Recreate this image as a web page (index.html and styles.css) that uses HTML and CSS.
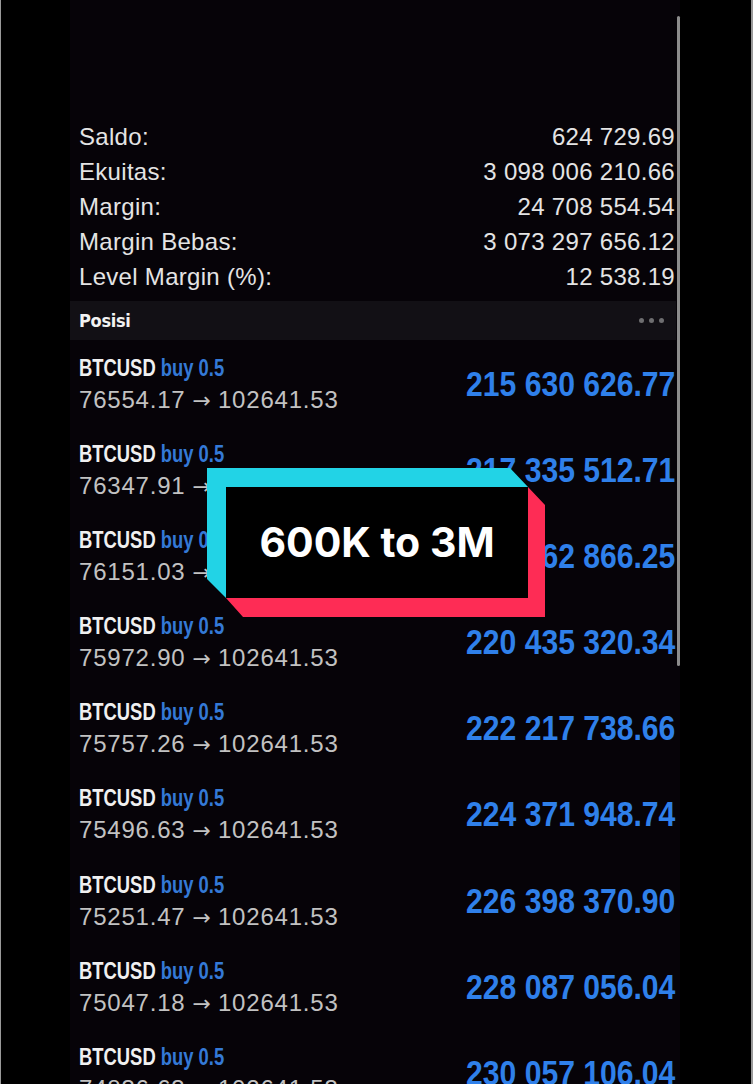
FILE: index.html
```html
<!DOCTYPE html>
<html lang="id">
<head>
	<meta charset="UTF-8">
	<title>Posisi</title>
	<link rel="stylesheet" href="styles.css">
</head>
<body>
	<div class="screen">
		<div class="panel">
			<div class="scrollbar"></div>

			<!-- ringkasan akun -->
			<div class="summary">
				<div class="sum-row"><span>Saldo:</span><span>624 729.69</span></div>
				<div class="sum-row"><span>Ekuitas:</span><span>3 098 006 210.66</span></div>
				<div class="sum-row"><span>Margin:</span><span>24 708 554.54</span></div>
				<div class="sum-row"><span>Margin Bebas:</span><span>3 073 297 656.12</span></div>
				<div class="sum-row"><span>Level Margin (%):</span><span>12 538.19</span></div>
			</div>

			<div class="section-head">
				<span class="section-title">Posisi</span>
				<span class="dots"><i></i><i></i><i></i></span>
			</div>

			<!-- daftar posisi -->
			<ul class="positions">
				<li class="pos">
					<div class="pos-info">
						<p class="pos-name">BTCUSD <span class="pos-type">buy 0.5</span></p>
						<p class="pos-price">76554.17<span class="arrow">→</span>102641.53</p>
					</div>
					<div class="pos-profit">215 630 626.77</div>
				</li>
				<li class="pos">
					<div class="pos-info">
						<p class="pos-name">BTCUSD <span class="pos-type">buy 0.5</span></p>
						<p class="pos-price">76347.91<span class="arrow">→</span>102641.53</p>
					</div>
					<div class="pos-profit">217 335 512.71</div>
				</li>
				<li class="pos">
					<div class="pos-info">
						<p class="pos-name">BTCUSD <span class="pos-type">buy 0.5</span></p>
						<p class="pos-price">76151.03<span class="arrow">→</span>102641.53</p>
					</div>
					<div class="pos-profit">218 962 866.25</div>
				</li>
				<li class="pos">
					<div class="pos-info">
						<p class="pos-name">BTCUSD <span class="pos-type">buy 0.5</span></p>
						<p class="pos-price">75972.90<span class="arrow">→</span>102641.53</p>
					</div>
					<div class="pos-profit">220 435 320.34</div>
				</li>
				<li class="pos">
					<div class="pos-info">
						<p class="pos-name">BTCUSD <span class="pos-type">buy 0.5</span></p>
						<p class="pos-price">75757.26<span class="arrow">→</span>102641.53</p>
					</div>
					<div class="pos-profit">222 217 738.66</div>
				</li>
				<li class="pos">
					<div class="pos-info">
						<p class="pos-name">BTCUSD <span class="pos-type">buy 0.5</span></p>
						<p class="pos-price">75496.63<span class="arrow">→</span>102641.53</p>
					</div>
					<div class="pos-profit">224 371 948.74</div>
				</li>
				<li class="pos">
					<div class="pos-info">
						<p class="pos-name">BTCUSD <span class="pos-type">buy 0.5</span></p>
						<p class="pos-price">75251.47<span class="arrow">→</span>102641.53</p>
					</div>
					<div class="pos-profit">226 398 370.90</div>
				</li>
				<li class="pos">
					<div class="pos-info">
						<p class="pos-name">BTCUSD <span class="pos-type">buy 0.5</span></p>
						<p class="pos-price">75047.18<span class="arrow">→</span>102641.53</p>
					</div>
					<div class="pos-profit">228 087 056.04</div>
				</li>
				<li class="pos">
					<div class="pos-info">
						<p class="pos-name">BTCUSD <span class="pos-type">buy 0.5</span></p>
						<p class="pos-price">74836.63<span class="arrow">→</span>102641.53</p>
					</div>
					<div class="pos-profit">230 057 106.04</div>
				</li>
			</ul>
		</div>

		<!-- label di atas video -->
		<div class="badge">
			<svg class="badge-frame" width="339" height="150" viewBox="0 0 339 150">
				<polygon points="0,0 303,0 321,19 19,19 19,130 0,111" fill="#22d3e6"/>
				<polygon points="321,19 338,37 338,149 36,149 19,130 321,130" fill="#fe2c55"/>
				<rect x="19" y="19" width="302" height="111" fill="#000"/>
			</svg>
			<span class="badge-text">600K to 3M</span>
		</div>
	</div>
</body>
</html>
```

FILE: styles.css
```css
html,
body,
ul,
li,
p {
	margin: 0;
	padding: 0;
}
li {
	list-style: none;
}
body {
	background: #000;
	font-family: "Liberation Sans", Arial, sans-serif;
}
.screen {
	position: relative;
	width: 753px;
	height: 1084px;
	overflow: hidden;
	box-sizing: border-box;
	border-left: 1px solid #9a9a9a;
	border-right: 2px solid #9a9a9a;
	background: #000;
}
.panel {
	position: relative;
	width: 610px;
	height: 1084px;
	margin-left: 69px;
	padding-top: 119px;
	box-sizing: border-box;
	background: #060308;
}
.scrollbar {
	position: absolute;
	top: 16px;
	right: 0;
	width: 3px;
	height: 650px;
	border-radius: 2px;
	background: #8c8c8c;
}

/* ringkasan */
.summary {
	padding: 0 5px 0 9px;
}
.sum-row {
	display: flex;
	justify-content: space-between;
	height: 35px;
	line-height: 35px;
	font-size: 24px;
	letter-spacing: 0.3px;
	color: #e4e4e4;
}

.section-head {
	display: flex;
	align-items: center;
	justify-content: space-between;
	height: 39px;
	margin: 7px 4px 0 0;
	padding: 0 12px 0 9px;
	background: #121015;
}
.section-title {
	font-family: "DejaVu Sans Condensed", "DejaVu Sans", sans-serif;
	font-weight: bold;
	font-size: 18px;
	letter-spacing: -0.3px;
	color: #f2f2f2;
}
.dots {
	display: flex;
	gap: 5px;
}
.dots i {
	width: 5px;
	height: 5px;
	border-radius: 50%;
	background: #6e6e70;
}

/* posisi */
.pos {
	display: flex;
	justify-content: space-between;
	height: 86.1px;
	padding: 0 5px 0 9px;
}
.pos-name {
	padding-top: 14px;
	height: 28px;
	line-height: 28px;
	font-size: 23px;
	font-weight: bold;
	white-space: nowrap;
	color: #f0f0f0;
	transform: scaleX(0.8);
	transform-origin: left center;
}
.pos-type {
	color: #3479d6;
}
.pos-price {
	height: 36px;
	line-height: 36px;
	font-size: 24px;
	letter-spacing: 0.8px;
	color: #c2c2c2;
}
.arrow {
	margin: 0 7px;
	font-family: "DejaVu Sans", sans-serif;
	font-size: 22px;
	letter-spacing: 0;
}
.pos-profit {
	padding-top: 25px;
	line-height: 38px;
	font-size: 35px;
	font-weight: bold;
	color: #2f80ea;
	transform: scaleX(0.86);
	transform-origin: right center;
}

/* label */
.badge {
	position: absolute;
	left: 206px;
	top: 468px;
	width: 339px;
	height: 150px;
}
.badge-frame {
	display: block;
}
.badge-text {
	position: absolute;
	left: 19px;
	top: 19px;
	width: 302px;
	height: 111px;
	line-height: 111px;
	text-align: center;
	font-family: Inter, "Open Sans", sans-serif;
	font-weight: 700;
	font-size: 41px;
	color: #fff;
}
```
